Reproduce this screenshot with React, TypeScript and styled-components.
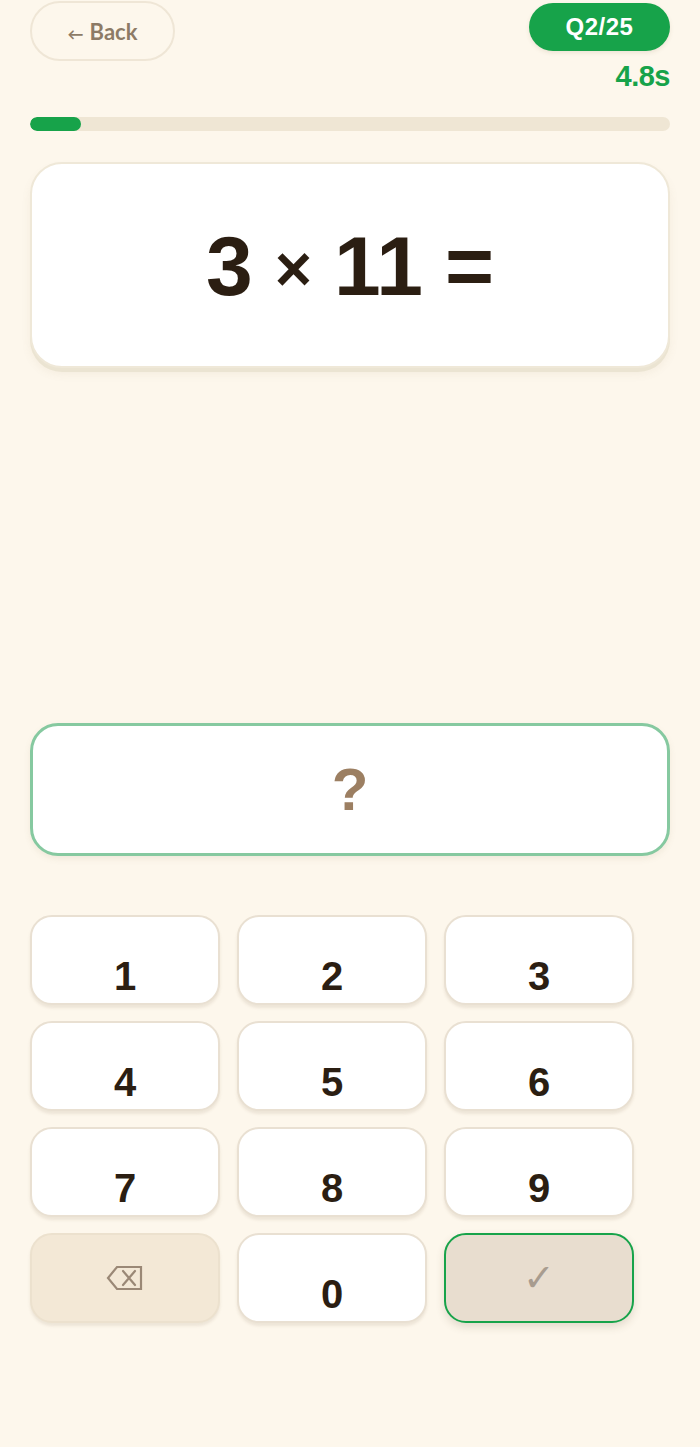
import React from "react";
import styled, { createGlobalStyle } from "styled-components";

const Global = createGlobalStyle`
  html, body { margin: 0; padding: 0; background: #fdf7ec; }
  body { font-family: "Liberation Sans", Arial, sans-serif; }
  #root { min-height: 1447px; }
`;

const Page = styled.div`
  padding: 0 30px;
  display: flex;
  flex-direction: column;
`;

const Header = styled.div`
  display: flex;
  justify-content: space-between;
  align-items: flex-start;
  height: 117px;
`;

const BackButton = styled.button`
  margin-top: 1px;
  width: 145px;
  height: 60px;
  border-radius: 30px;
  border: 2px solid #efe6d6;
  background: #fdf7ec;
  color: #8d7b66;
  font-family: "Lato", "Liberation Sans", sans-serif;
  font-weight: 700;
  font-size: 22px;
  display: flex;
  align-items: center;
  justify-content: center;
  gap: 6px;
  padding: 0;
`;

const Arrow = styled.span`
  font-size: 16px;
  margin-top: 4px;
`;

const Right = styled.div`
  display: flex;
  flex-direction: column;
  align-items: flex-end;
`;

const Badge = styled.div`
  margin-top: 3px;
  width: 141px;
  height: 48px;
  border-radius: 24px;
  background: #17a34a;
  color: #fff;
  font-weight: 700;
  font-size: 24px;
  letter-spacing: 0.5px;
  display: flex;
  align-items: center;
  justify-content: center;
  box-shadow: 0 2px 4px rgba(120, 100, 60, 0.12);
`;

const Timer = styled.div`
  margin-top: 9px;
  color: #17a34a;
  font-weight: 700;
  font-size: 29px;
  line-height: 32px;
  letter-spacing: -0.5px;
`;

const Track = styled.div`
  height: 14px;
  border-radius: 7px;
  background: #efe6d4;
  overflow: hidden;
`;

const Fill = styled.div`
  height: 100%;
  border-radius: 7px;
  background: #17a34a;
`;

const QuestionCard = styled.div`
  margin-top: 31px;
  height: 206px;
  box-sizing: border-box;
  border-radius: 32px;
  background: #fff;
  border: 2px solid #efe8d8;
  box-shadow: 0 4px 0 #ebe4d2, 0 6px 10px rgba(140, 120, 80, 0.08);
  display: flex;
  align-items: center;
  justify-content: center;
`;

const QuestionText = styled.div`
  font-weight: 700;
  font-size: 84px;
  color: #2b1e12;
  word-spacing: -6px;
  margin-top: 2px;
  display: flex;
  align-items: center;
  gap: 22px;
`;

const Times = styled.span`
  font-size: 64px;
  margin-top: 6px;
`;

const AnswerBox = styled.div`
  margin-top: 355px;
  height: 133px;
  box-sizing: border-box;
  border-radius: 28px;
  background: #fff;
  border: 3px solid #86c9a0;
  box-shadow: 0 3px 6px rgba(140, 120, 80, 0.1);
  display: flex;
  align-items: center;
  justify-content: center;
  color: #9c7f62;
  font-weight: 700;
  font-size: 60px;
`;

const Keypad = styled.div`
  margin-top: 59px;
  display: grid;
  grid-template-columns: repeat(3, 190px);
  grid-auto-rows: 90px;
  column-gap: 17px;
  row-gap: 16px;
`;

const Key = styled.button<{ $variant?: "digit" | "delete" | "submit" }>`
  box-sizing: border-box;
  border-radius: 22px;
  font-family: "Liberation Sans", Arial, sans-serif;
  font-weight: 700;
  font-size: 40px;
  color: #2b1e12;
  display: flex;
  align-items: center;
  justify-content: center;
  padding: ${(p) => (p.$variant === "digit" ? "32px 0 0" : "0")};
  background: ${(p) =>
    p.$variant === "delete" ? "#f3e8d6" : p.$variant === "submit" ? "#e8ddcf" : "#ffffff"};
  border: 2px solid
    ${(p) => (p.$variant === "submit" ? "#17a34a" : p.$variant === "delete" ? "#ece1ce" : "#e9e0d2")};
  box-shadow: ${(p) =>
    p.$variant === "submit"
      ? "0 4px 8px rgba(90, 70, 40, 0.16)"
      : "0 3px 3px rgba(140, 120, 90, 0.14)"};
`;

const Check = styled.span`
  color: #a89c8f;
  font-family: "DejaVu Sans", sans-serif;
  font-size: 38px;
  font-weight: 700;
`;

const BackspaceIcon = () => (
  <svg width="38" height="26" viewBox="0 0 38 26" fill="none" stroke="#9a8876" strokeWidth="2.2">
    <path d="M11 2 H35 V24 H11 L2 13 Z" strokeLinejoin="miter" />
    <path d="M17 6 L29 20 M29 6 L17 20" strokeLinecap="round" />
  </svg>
);

export default function App() {
  const digits = ["1", "2", "3", "4", "5", "6", "7", "8", "9"];
  const progress = 2 / 25;
  return (
    <>
      <Global />
      <Page>
        <Header>
          <BackButton>
            <Arrow>←</Arrow>
            <span>Back</span>
          </BackButton>
          <Right>
            <Badge>Q2/25</Badge>
            <Timer>4.8s</Timer>
          </Right>
        </Header>
        <Track>
          <Fill style={{ width: `${progress * 100}%` }} />
        </Track>
        <QuestionCard>
          <QuestionText>
            <span>3</span>
            <Times>×</Times>
            <span>11</span>
            <span>=</span>
          </QuestionText>
        </QuestionCard>
        <AnswerBox>?</AnswerBox>
        <Keypad>
          {digits.map((d) => (
            <Key key={d} $variant="digit">
              {d}
            </Key>
          ))}
          <Key $variant="delete">
            <BackspaceIcon />
          </Key>
          <Key $variant="digit">0</Key>
          <Key $variant="submit">
            <Check>✓</Check>
          </Key>
        </Keypad>
      </Page>
    </>
  );
}
